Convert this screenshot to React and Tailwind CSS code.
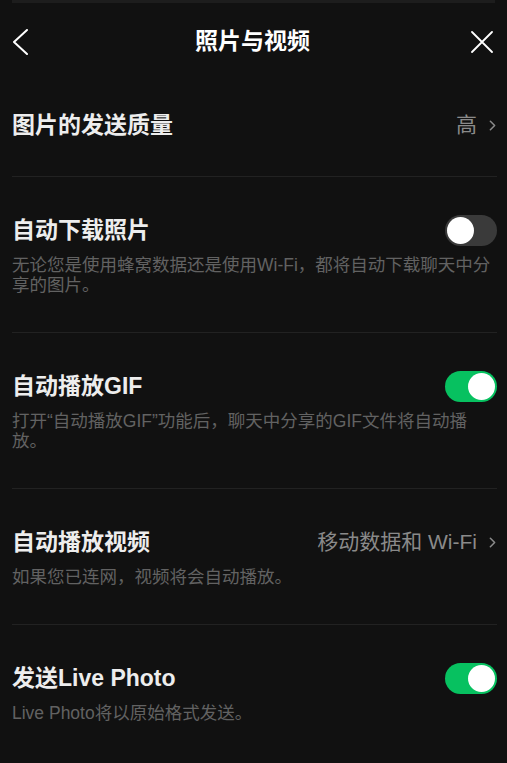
import { ChevronRight } from 'lucide-react'

const font = { fontFamily: '"Liberation Sans", "Noto Sans CJK SC", sans-serif' }

function Toggle({ on }) {
  return (
    <div className={`w-[52px] h-[31px] rounded-full p-[2px] flex shrink-0 ${on ? 'bg-[#07c160] justify-end' : 'bg-[#3a3a3a] justify-start'}`}>
      <div className="w-[27px] h-[27px] rounded-full bg-white" />
    </div>
  )
}

function Row({ title, desc, right, toggle, first }) {
  return (
    <div className={`pl-3 pr-[10px] ${first ? '' : 'pt-[38px]'} ${desc ? 'pb-[37px]' : 'pb-[36px]'}`}>
      <div className="flex items-center justify-between h-[30px]">
        <span className="text-[23px] font-semibold text-[#ededed] leading-[30px]">{title}</span>
        {toggle !== undefined && <Toggle on={toggle} />}
        {right && (
          <span className="flex items-center text-[21px] text-[#8a8a8a]">
            {right}
            <ChevronRight size={17} strokeWidth={2.2} className="ml-[7px] -mr-[4px]" />
          </span>
        )}
      </div>
      {desc && (
        <p className="mt-[10px] text-[17.5px] leading-[20px] text-[#626262]">{desc}</p>
      )}
    </div>
  )
}

function Divider() {
  return <div className="ml-3 mr-[10px] h-px bg-[#222222]" />
}

export default function App() {
  return (
    <div className="w-[507px] h-[763px] bg-[#111111] overflow-hidden" style={font}>
      {/* top strip */}
      <div className="ml-3 mr-[12px] h-[3px] bg-[#1d1d1d]" />

      {/* Header */}
      <div className="h-[69px] pt-[8px] grid grid-cols-[1fr_auto_1fr] items-center pl-[12px] pr-[14px]">
        <svg width="16" height="26" viewBox="0 0 16 26" fill="none" stroke="white" strokeWidth="2" strokeLinecap="round" strokeLinejoin="round">
          <path d="M15 1 L2 13 L15 25" />
        </svg>
        <h1 className="text-[23px] font-bold text-white">照片与视频</h1>
        <svg width="22" height="22" viewBox="0 0 22 22" fill="none" stroke="white" strokeWidth="1.8" strokeLinecap="round" className="justify-self-end">
          <path d="M1 1 L21 21 M21 1 L1 21" />
        </svg>
      </div>

      <div className="pt-[38px]">
        <Row first title="图片的发送质量" right="高" />
      </div>
      <Divider />
      <Row
        title="自动下载照片"
        toggle={false}
        desc="无论您是使用蜂窝数据还是使用Wi-Fi，都将自动下载聊天中分享的图片。"
      />
      <Divider />
      <Row
        title="自动播放GIF"
        toggle={true}
        desc="打开“自动播放GIF”功能后，聊天中分享的GIF文件将自动播放。"
      />
      <Divider />
      <Row
        title="自动播放视频"
        right="移动数据和 Wi-Fi"
        desc="如果您已连网，视频将会自动播放。"
      />
      <Divider />
      <Row
        title="发送Live Photo"
        toggle={true}
        desc="Live Photo将以原始格式发送。"
      />
    </div>
  )
}
